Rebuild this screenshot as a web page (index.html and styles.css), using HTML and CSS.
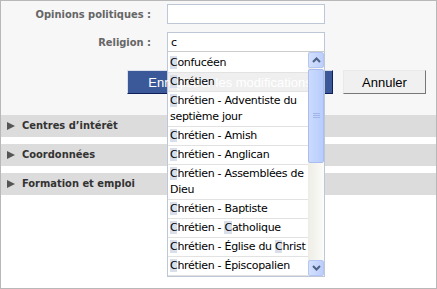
FILE: index.html
```html
<!DOCTYPE html>
<html lang="fr">
<head>
  <meta charset="utf-8"/>
  <title>Modifier le profil</title>
  <link rel="stylesheet" href="styles.css">
</head>
<body>
  <div class="page">
    <div class="form">
      <div class="row">
        <label class="label">Opinions politiques :</label>
        <input class="field" type="text"/>
      </div>
      <div class="row">
        <label class="label">Religion :</label>
        <div class="combo">
          <input class="field" type="text" value="c"/>
          <div class="suggest">
            <ul class="items">
              <li><span class="txt"><em>C</em>onfucéen</span></li>
              <li class="hover"><span class="txt"><em>C</em>hrétien</span></li>
              <li><span class="txt"><em>C</em>hrétien - Adventiste du septième jour</span></li>
              <li><span class="txt"><em>C</em>hrétien - Amish</span></li>
              <li><span class="txt"><em>C</em>hrétien - Anglican</span></li>
              <li><span class="txt"><em>C</em>hrétien - Assemblées de Dieu</span></li>
              <li><span class="txt"><em>C</em>hrétien - Baptiste</span></li>
              <li><span class="txt"><em>C</em>hrétien - <em>C</em>atholique</span></li>
              <li><span class="txt"><em>C</em>hrétien - Église du <em>C</em>hrist</span></li>
              <li><span class="txt"><em>C</em>hrétien - Épiscopalien</span></li>
            </ul>
            <div class="scrollbar">
              <div class="sb-btn">
                <svg width="9" height="6" viewBox="0 0 9 6"><polyline points="1,5 4.5,1.5 8,5" fill="none" stroke="#4d6185" stroke-width="2"/></svg>
              </div>
              <div class="sb-thumb">
                <svg width="7" height="6" viewBox="0 0 7 6"><path d="M0 0.5h7M0 2.5h7M0 4.5h7" stroke="#9fb5e8" stroke-width="1"/></svg>
              </div>
              <div class="sb-track"></div>
              <div class="sb-btn">
                <svg width="9" height="6" viewBox="0 0 9 6"><polyline points="1,1 4.5,4.5 8,1" fill="none" stroke="#4d6185" stroke-width="2"/></svg>
              </div>
            </div>
          </div>
        </div>
      </div>
      <div class="actions">
        <button class="btn primary"><span class="btn-label">Enregistrer les modifications</span></button>
        <button class="btn">Annuler</button>
      </div>
    </div>

    <div class="sections">
      <div class="section"><span class="arrow"></span>Centres d’intérêt</div>
      <div class="section"><span class="arrow"></span>Coordonnées</div>
      <div class="section"><span class="arrow"></span>Formation et emploi</div>
    </div>
  </div>
</body>
</html>
```

FILE: styles.css
```css
body { margin:0; padding:0; font-family:"DejaVu Sans", sans-serif; font-size:11px; color:#000; }
.page { width:437px; height:289px; box-sizing:border-box; border:1px solid #b8b8b8; background:#fff; }

.form { background:#f7f7f7; height:114px; padding-top:3px; box-sizing:border-box; }
.row { display:grid; grid-template-columns:150px 158px; column-gap:16px; align-items:center; margin-bottom:8px; }
.label { text-align:right; font-weight:bold; font-stretch:condensed; color:#666; font-size:11px; }
.field { width:158px; height:20px; box-sizing:border-box; margin:0; border:1px solid #bdc7d8; background:#fff; padding:0 3px; font-family:"DejaVu Sans", sans-serif; font-size:11px; color:#000; outline:none; }

.combo { position:relative; height:20px; }
.suggest { position:absolute; top:19px; left:0; width:158px; height:226px; box-sizing:border-box; border:1px solid #bdc7d8; border-top-color:#ccc; background:#fff; overflow:hidden; }
.items { list-style:none; margin:0; padding:2px 0 0; width:140px; letter-spacing:-0.3px; }
.items li { padding:1px 0 1px 2px; line-height:16px; border-bottom:1px solid #e2e2e2; }
.items li.hover { background:#efefef; }
.txt { position:relative; z-index:2; }
.txt em { font-style:normal; background:#d8dfea; }

.scrollbar { position:absolute; z-index:3; top:0; right:0; bottom:0; width:16px; display:flex; flex-direction:column; background:linear-gradient(to right, #eeede5, #fbfbf9); }
.sb-btn { height:16px; box-sizing:border-box; border:1px solid #b4c6f4; border-radius:2px; background:linear-gradient(to right, #d3e0fd, #bccefb); display:flex; align-items:center; justify-content:center; }
.sb-thumb { height:94px; margin-top:1px; box-sizing:border-box; border:1px solid #a9bdf0; border-radius:2px; background:linear-gradient(to right, #cbdafd, #b9cdfc); display:flex; align-items:center; justify-content:center; }
.sb-track { flex:1; }

.actions { display:flex; gap:10px; padding-left:126px; margin-top:18px; }
.btn { height:24px; margin:0; padding:0; font-family:"Liberation Sans", Arial, sans-serif; font-size:13px; cursor:pointer; }
.primary { width:206px; background:#3b5998; color:#fff; border:1px solid; border-color:#d9dfea #0e1f5b #0e1f5b #d9dfea; }
.btn-label { position:relative; z-index:1; }
.btn:not(.primary) { width:83px; background:#f0f0f0; color:#000; border:1px solid; border-color:#e9e9e9 #777 #777 #e9e9e9; }

.section { height:22px; line-height:22px; margin-bottom:7px; padding-left:6px; background:#dcdcdc; color:#333; font-weight:bold; font-stretch:condensed; display:flex; align-items:center; }
.arrow { width:0; height:0; border-left:8px solid #555; border-top:4.5px solid transparent; border-bottom:4.5px solid transparent; margin-right:7px; }
```
